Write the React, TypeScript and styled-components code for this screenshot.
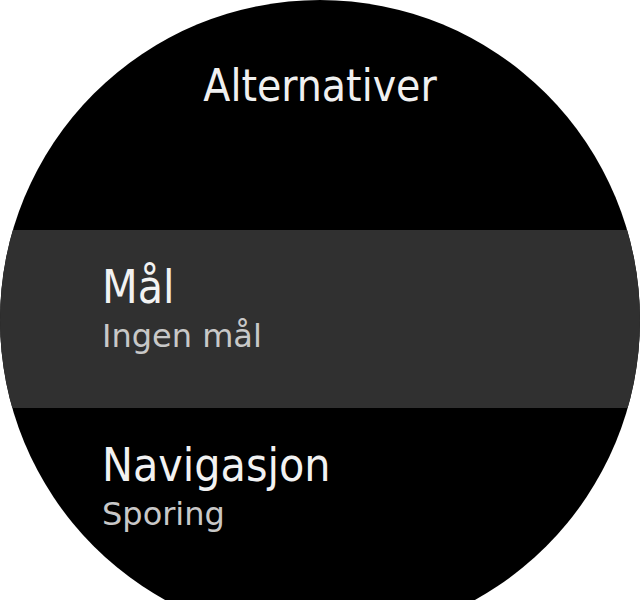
import styled, { createGlobalStyle } from 'styled-components';

const GlobalStyle = createGlobalStyle`
  html, body {
    margin: 0;
    padding: 0;
    background: #fff;
    overflow: hidden;
  }
`;

type Option = {
  title: string;
  value: string;
  active?: boolean;
};

const options: Option[] = [
  { title: 'Mål', value: 'Ingen mål', active: true },
  { title: 'Navigasjon', value: 'Sporing' },
];

const App = () => {
  return (
    <>
      <GlobalStyle />
      <Styled.Frame>
        <Styled.Screen>
          <Styled.Header>
            <Styled.Title>Alternativer</Styled.Title>
          </Styled.Header>
          <Styled.List>
            {options.map((o) => (
              <Styled.Item key={o.title} $active={o.active}>
                <Styled.ItemTitle>{o.title}</Styled.ItemTitle>
                <Styled.ItemValue>{o.value}</Styled.ItemValue>
              </Styled.Item>
            ))}
          </Styled.List>
        </Styled.Screen>
      </Styled.Frame>
    </>
  );
};

export default App;

const Styled = {
  Frame: styled.div`
    width: 640px;
    height: 600px;
    overflow: hidden;
  `,
  Screen: styled.div`
    width: 640px;
    height: 640px;
    border-radius: 50%;
    background: #000;
    overflow: hidden;
    display: flex;
    flex-direction: column;
  `,
  Header: styled.div`
    height: 230px;
    box-sizing: border-box;
    padding-top: 64px;
    display: flex;
    justify-content: center;
  `,
  Title: styled.h1`
    margin: 0;
    font-family: "DejaVu Sans Condensed", "DejaVu Sans", sans-serif;
    font-stretch: condensed;
    font-weight: normal;
    font-size: 44px;
    line-height: 1;
    color: #f0f0f0;
  `,
  List: styled.ul`
    margin: 0;
    padding: 0;
    list-style: none;
  `,
  Item: styled.li<{ $active?: boolean }>`
    height: 178px;
    box-sizing: border-box;
    padding: 34px 0 0 102px;
    display: flex;
    flex-direction: column;
    gap: 10px;
    background: ${(p) => (p.$active ? '#303030' : 'transparent')};
  `,
  ItemTitle: styled.span`
    font-family: "DejaVu Sans Condensed", "DejaVu Sans", sans-serif;
    font-stretch: condensed;
    font-size: 46px;
    line-height: 1;
    color: #f2f2f2;
  `,
  ItemValue: styled.span`
    font-family: "DejaVu Sans", Verdana, sans-serif;
    font-size: 32px;
    line-height: 1;
    color: #c8c8c8;
  `,
};
